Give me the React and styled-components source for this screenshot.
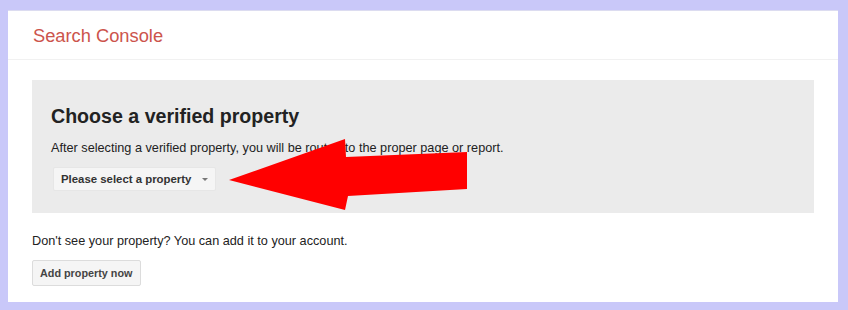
import styled, { createGlobalStyle } from 'styled-components';

const GlobalStyle = createGlobalStyle`
    html, body {
        margin: 0;
        padding: 0;
        background: #c9c8f9;
        font-family: Arial, "Liberation Sans", sans-serif;
    }
`;

const App = () => {
    return (
        <>
            <GlobalStyle />
            <Page>
                <Panel>
                    <Header>
                        <Brand>Search Console</Brand>
                    </Header>
                    <Content>
                        <ChooseBox>
                            <Title>Choose a verified property</Title>
                            <Desc>
                                After selecting a verified property, you will be routed to the proper page or report.
                            </Desc>
                            <SelectBtn>
                                Please select a property
                                <Caret />
                            </SelectBtn>
                            <Arrow viewBox='0 0 250 80' width='250' height='80'>
                                <polygon
                                    points='0,41 116,0 117,18 238,13 238,50 119,57 116,71'
                                    fill='#ff0000'
                                />
                            </Arrow>
                        </ChooseBox>
                        <Note>Don't see your property? You can add it to your account.</Note>
                        <AddBtn>Add property now</AddBtn>
                    </Content>
                </Panel>
            </Page>
        </>
    );
};

export default App;

const Page = styled.div`
    width: 848px;
    height: 310px;
    box-sizing: border-box;
    padding: 10px 10px 8px 8px;
`;

const Panel = styled.div`
    background: #fff;
    height: 100%;
    box-sizing: border-box;
    border-top: 1px solid #dcdcf0;
`;

const Header = styled.div`
    height: 49px;
    display: flex;
    align-items: center;
    padding-left: 25px;
    border-bottom: 1px solid #f1f1f1;
    box-sizing: border-box;
`;

const Brand = styled.div`
    color: #cc544c;
    font-size: 18.3px;
    margin-top: 1px;
`;

const Content = styled.div`
    padding: 20px 24px 0 24px;
`;

const ChooseBox = styled.div`
    position: relative;
    background: #ebebeb;
    height: 133px;
    box-sizing: border-box;
    padding: 25px 19px 0 19px;
`;

const Title = styled.div`
    font-size: 19.6px;
    font-weight: bold;
    color: #222;
    line-height: 22px;
`;

const Desc = styled.div`
    font-size: 12.7px;
    color: #222;
    margin-top: 14px;
    line-height: 15px;
`;

const SelectBtn = styled.div`
    display: inline-flex;
    align-items: center;
    margin-top: 11px;
    margin-left: 2px;
    height: 24px;
    padding: 0 7px 0 7px;
    background: #f5f5f5;
    border: 1px solid #e6e6e6;
    border-radius: 2px;
    font-size: 11.4px;
    font-weight: bold;
    color: #333;
    box-sizing: border-box;
`;

const Caret = styled.span`
    display: inline-block;
    margin-left: 11px;
    width: 0;
    height: 0;
    border-left: 3px solid transparent;
    border-right: 3px solid transparent;
    border-top: 3px solid #777;
`;

const Arrow = styled.svg`
    position: absolute;
    left: 197px;
    top: 59px;
`;

const Note = styled.div`
    font-size: 12.7px;
    color: #222;
    margin-top: 21px;
    line-height: 15px;
`;

const AddBtn = styled.div`
    display: inline-flex;
    align-items: center;
    margin-top: 11px;
    height: 26px;
    padding: 0 8px 0 7px;
    background: #f5f5f5;
    border: 1px solid #dcdcdc;
    border-radius: 2px;
    font-size: 10.8px;
    font-weight: bold;
    color: #444;
    box-sizing: border-box;
`;
